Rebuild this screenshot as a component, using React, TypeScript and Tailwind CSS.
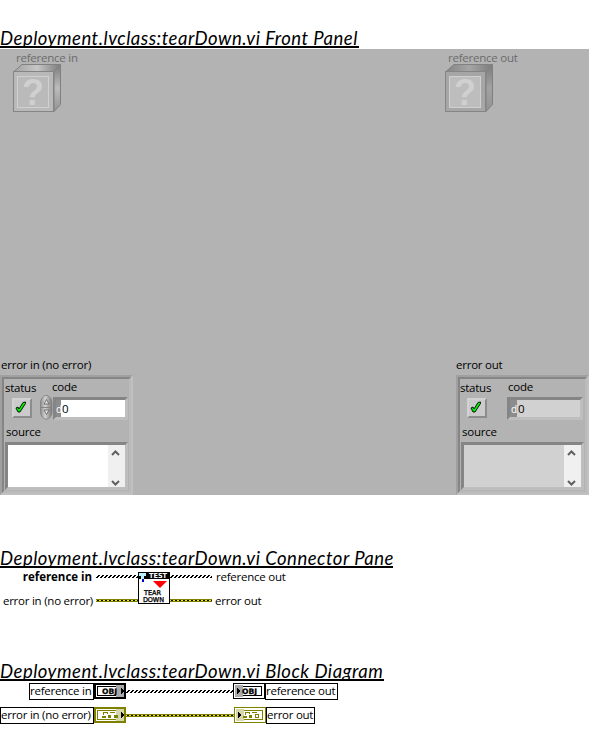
import type { ReactNode } from 'react';

const face = "font-['Open_Sans','Noto_Sans',sans-serif] whitespace-nowrap";
const ui = `${face} text-[11.5px]`;
const label = `${ui} leading-[16px] tracking-[-0.24px]`;

function Heading({ children, className }: { children: ReactNode; className: string }) {
  return (
    <h2
      className={`h-[22px] overflow-hidden border-b-2 border-black font-['Lato',sans-serif] text-[18.5px] leading-[24px] tracking-[0.5px] whitespace-nowrap text-black italic ${className}`}
    >
      {children}
    </h2>
  );
}

function Cube({ out = false }: { out?: boolean }) {
  const id = out ? 'cube-out' : 'cube-in';
  return (
    <svg width="49" height="49" viewBox="0 0 49 49" className="block">
      <defs>
        <linearGradient id={`${id}-top`} x1="0" x2="1">
          <stop offset="0" stopColor={out ? '#858585' : '#a2a2a2'} />
          <stop offset="0.5" stopColor={out ? '#a5a5a5' : '#c6c6c6'} />
          <stop offset="1" stopColor="#7e7e7e" />
        </linearGradient>
        <linearGradient id={`${id}-side`} x1="0" y1="0" x2="0" y2="1">
          <stop offset="0" stopColor="#7c7c7c" />
          <stop offset="0.5" stopColor={out ? '#a2a2a2' : '#bcbcbc'} />
          <stop offset="1" stopColor="#929292" />
        </linearGradient>
      </defs>
      <path d="M1 7.5 L9 0.5 H47 L41 7.5 Z" fill={`url(#${id}-top)`} stroke="#808080" />
      <path d="M41 7.5 L47.5 0.5 V40.5 L41 47.5 Z" fill={`url(#${id}-side)`} stroke="#808080" />
      <rect x="0.5" y="7.5" width="40" height="40" fill={out ? '#a6a6a6' : '#b9b9b9'} stroke="#858585" />
      <rect x="4.5" y="12.5" width="31" height="31" fill={out ? '#bdbdbd' : '#bababa'} stroke="#d0d0d0" />
      <text x="20" y="41" textAnchor="middle" fontFamily="Liberation Sans, sans-serif" fontWeight="700" fontSize="36" fill="#d0d0d0">?</text>
    </svg>
  );
}

function Check() {
  return (
    <div className="h-[20px] w-[20px] border-2 border-t-[#d2d2d2] border-r-[#8c8c8c] border-b-[#8c8c8c] border-l-[#d2d2d2] bg-[#cbcbcb] pt-px pl-px">
      <svg width="12" height="12" viewBox="0 0 12 12" className="block">
        <path d="M1 7 L3 6 L4 8 L8 1.5 L10.5 1 L10.5 2.5 L5 11 L3 11 Z" fill="#00f000" stroke="#000" strokeWidth="0.9" />
      </svg>
    </div>
  );
}

function Spinner() {
  return (
    <svg width="13" height="25" viewBox="0 0 13 25" className="block">
      <defs>
        <linearGradient id="spin" x1="0" x2="1">
          <stop offset="0" stopColor="#8c8c8c" />
          <stop offset="0.4" stopColor="#d2d2d2" />
          <stop offset="1" stopColor="#777" />
        </linearGradient>
      </defs>
      <path d="M5 0.5 H8 Q12 3 12 8 V17 Q12 22 8 24 H5 Q0.5 22 0.5 17 V8 Q0.5 3 5 0.5 Z" fill="url(#spin)" stroke="#808080" strokeWidth="0.8" />
      <path d="M1 12.5 H12" stroke="#858585" />
      <path d="M4 9 L6.5 4.5 L9 9 Z M4 15 H9 L6.5 19.5 Z" fill="#e0e0e0" stroke="#606060" strokeWidth="0.8" />
    </svg>
  );
}

const sunken = 'border-t-[#858585] border-l-[#858585] border-r-[#bebebe] border-b-[#bebebe]';

function Chevron({ down = false }: { down?: boolean }) {
  return (
    <svg width="9" height="6" viewBox="0 0 9 6" className="-ml-[2px] block">
      <path d={down ? 'M1 1 L4.5 4.5 L8 1' : 'M1 5 L4.5 1.5 L8 5'} fill="none" stroke="#606060" strokeWidth="2" />
    </svg>
  );
}

function Cluster({ out = false }: { out?: boolean }) {
  const fill = out ? 'bg-[#d1d1d1]' : 'bg-white';
  return (
    <div className="h-[120px] w-[133px] border-2 border-t-[#a0a0a0] border-r-[#c0c0c0] border-b-[#c0c0c0] border-l-[#a0a0a0]">
      <div className="flex h-full flex-col border-2 border-t-[#858585] border-r-[#bababa] border-b-[#bababa] border-l-[#858585]">
        <div className={`flex h-[15px] ${label}`}>
          <span className={`w-[48px] pt-px ${out ? '' : 'pl-px'}`}>status</span>
          <span>code</span>
        </div>
        <div className="flex h-[28px] items-center">
          <div className={out ? 'ml-[7px]' : 'ml-[8px]'}>
            <Check />
          </div>
          {out ? (
            <div className="w-[20px]" />
          ) : (
            <div className="-mt-px ml-[8px] w-[13px]">
              <Spinner />
            </div>
          )}
          <div className={`flex h-[23px] border-[3px] ${sunken} ${out ? 'w-[76px]' : 'w-[75px]'}`}>
            <div className={`bg-[#8c8c8c] text-[10px] leading-[18px] text-white ${face} ${out ? 'w-[7px] pl-px' : 'w-[5px]'}`}>d</div>
            <div className={`flex-1 pl-px leading-[18px] text-black ${fill} ${ui}`}>0</div>
          </div>
        </div>
        <div className={`h-[20px] pt-[2px] pl-[2px] ${label}`}>source</div>
        <div className={`ml-px flex h-[48px] w-[123px] shrink-0 border-[3px] ${sunken}`}>
          <div className={`flex-1 ${fill}`} />
          <div className="flex w-[17px] flex-col items-center justify-between bg-[#f0f0f0] pt-[5px] pb-px">
            <Chevron />
            <Chevron down />
          </div>
        </div>
      </div>
    </div>
  );
}

function ObjectWire({ width }: { width: number }) {
  const n = Math.ceil(width / 4);
  return (
    <svg width={width} height="3" viewBox={`0 0 ${width} 3`} className="block shrink-0" shapeRendering="crispEdges">
      {Array.from({ length: n }, (_, i) => (
        <path key={i} d={`M${i * 4 + 2} 0h2v1h-1v1h-1v1h-2v-1h1v-1h1z`} fill="#000" />
      ))}
    </svg>
  );
}

function ErrorWire({ width }: { width: number }) {
  return (
    <svg width={width} height="3" viewBox={`0 0 ${width} 3`} className="block shrink-0" shapeRendering="crispEdges">
      <rect width={width} height="3" fill="#808000" />
      <path d={`M0 1.5H${width}`} stroke="#f0f000" />
      <path d={`M1 1.5H${width}`} stroke="#000" strokeDasharray="2 2" />
    </svg>
  );
}

function TestIcon() {
  return (
    <svg width="32" height="32" viewBox="0 0 32 32" className="block shrink-0">
      <rect x="0.5" y="0.5" width="31" height="31" fill="#fff" stroke="#000" />
      <rect width="32" height="7" fill="#000" />
      <path d="M1 1h7v3h-2v3h-3v-3h-2z" fill="#b8f4ff" />
      <path d="M4 7h2v3h-2z" fill="#0000d0" />
      <path d="M15 9H29L22 16Z" fill="#f00" />
      <text x="11" y="6" textLength="18" lengthAdjust="spacingAndGlyphs" fontFamily="DejaVu Sans, sans-serif" fontWeight="700" fontSize="6.8" fill="#fff">TEST</text>
      <text x="6" y="23" textLength="17" lengthAdjust="spacing" fontFamily="DejaVu Sans, sans-serif" fontSize="6.5" fill="#000" stroke="#000" strokeWidth="0.3">TEAR</text>
      <text x="5" y="30" textLength="21" lengthAdjust="spacing" fontFamily="DejaVu Sans, sans-serif" fontSize="6.5" fill="#000" stroke="#000" strokeWidth="0.3">DOWN</text>
    </svg>
  );
}

function Terminal({ error = false, out = false }: { error?: boolean; out?: boolean }) {
  const color = error ? '#808000' : '#000';
  const shade = error ? '#d6d6ac' : '#aaa';
  return (
    <svg width="32" height="16" viewBox="0 0 32 16" className="block shrink-0" shapeRendering="crispEdges">
      <rect width="32" height="16" fill={color} />
      <rect x={out ? 1 : 2} y={out ? 1 : 2} width={out ? 30 : 28} height={out ? 14 : 12} fill="#fff" />
      <rect x="3" y="3" width="26" height="10" fill={color} />
      <rect x="4" y="4" width="24" height="8" fill="#fff" />
      <rect x={out ? 2 : 22} y="2" width="8" height="12" fill={shade} />
      {error ? (
        <path
          d={
            out
              ? 'M11 5h5v1h-5zM11 6h1v2h-1zM15 6h1v1h-1zM18 5h5v1h-5zM9 9h4v2h-4zM15 8h3v3h-3zM21 7h4v4h-4zM22 8v2h2v-2z'
              : 'M9 5h5v1h-5zM9 6h1v2h-1zM13 6h1v1h-1zM16 5h5v1h-5zM8 9h4v2h-4zM14 8h3v3h-3zM20 8h4v3h-4z'
          }
          fill={color}
          fillRule="evenodd"
        />
      ) : (
        <text x={out ? 9 : 8} y="11" textLength="15" lengthAdjust="spacingAndGlyphs" fontFamily="DejaVu Sans, sans-serif" fontWeight="700" fontSize="7.5" fill="#000" stroke="#000" strokeWidth="0.3">
          OBJ
        </text>
      )}
      <path d={out ? 'M4 5l4 3l-4 3z' : 'M27 5l4 3l-4 3z'} fill="#000" />
    </svg>
  );
}

function Tag({ children, className }: { children: ReactNode; className: string }) {
  return (
    <div className={`h-[17px] shrink-0 border border-black bg-white text-black ${ui} leading-[14px] tracking-[-0.26px] ${className}`}>
      {children}
    </div>
  );
}

export default function App() {
  return (
    <main className="h-[748px] w-[589px] overflow-hidden bg-white pt-[26px] text-black">
      <section>
        <Heading className="w-[359px]">Deployment.lvclass:tearDown.vi Front Panel</Heading>
        <div className="mt-px flex h-[446px] flex-col justify-between bg-[#b3b3b3]">
          <div className="flex pl-[13px]">
            <div className="w-[432px]">
              <div className={`h-[15px] pt-px pl-[3px] text-[#6c6c6c] ${label}`}>reference in</div>
              <Cube />
            </div>
            <div>
              <div className={`h-[15px] pt-px pl-[3px] text-[#6c6c6c] ${label}`}>reference out</div>
              <Cube out />
            </div>
          </div>
          <div className="flex justify-between">
            <div>
              <div className={`h-[18px] pl-px ${label}`}>error in (no error)</div>
              <Cluster />
            </div>
            <div>
              <div className={`h-[18px] ${label}`}>error out</div>
              <Cluster out />
            </div>
          </div>
        </div>
      </section>

      <section className="mt-[51px]">
        <Heading className="w-[393px]">Deployment.lvclass:tearDown.vi Connector Pane</Heading>
        <div className="mt-[4px] flex h-[32px]">
          <div className={`flex w-[96px] flex-col justify-between pr-[4px] text-right ${label}`}>
            <span className="-mt-[3px] font-bold tracking-[-0.03px]">reference in</span>
            <span className="-mr-px -mb-[5px]">error in (no error)</span>
          </div>
          <div className="flex w-[42px] flex-col justify-between pt-[3px] pb-[2px]">
            <ObjectWire width={42} />
            <ErrorWire width={42} />
          </div>
          <TestIcon />
          <div className="flex w-[42px] flex-col justify-between pt-[3px] pb-[2px]">
            <ObjectWire width={42} />
            <ErrorWire width={42} />
          </div>
          <div className={`flex flex-col justify-between pl-[3px] ${label}`}>
            <span className="-mt-[3px] pl-px">reference out</span>
            <span className="-mb-[5px]">error out</span>
          </div>
        </div>
      </section>

      <section className="mt-[55px]">
        <Heading className="w-[384px]">Deployment.lvclass:tearDown.vi Block Diagram</Heading>
        <div className="mt-px flex h-[18px] items-center pl-[29px]">
          <Tag className="w-[65px]">reference in</Tag>
          <Terminal />
          <ObjectWire width={107} />
          <Terminal out />
          <Tag className="w-[73px]">reference out</Tag>
        </div>
        <div className="mt-[6px] flex h-[18px] items-center">
          <Tag className="w-[94px]">error in (no error)</Tag>
          <Terminal error />
          <ErrorWire width={108} />
          <Terminal error out />
          <Tag className="w-[49px]">error out</Tag>
        </div>
      </section>
    </main>
  );
}
